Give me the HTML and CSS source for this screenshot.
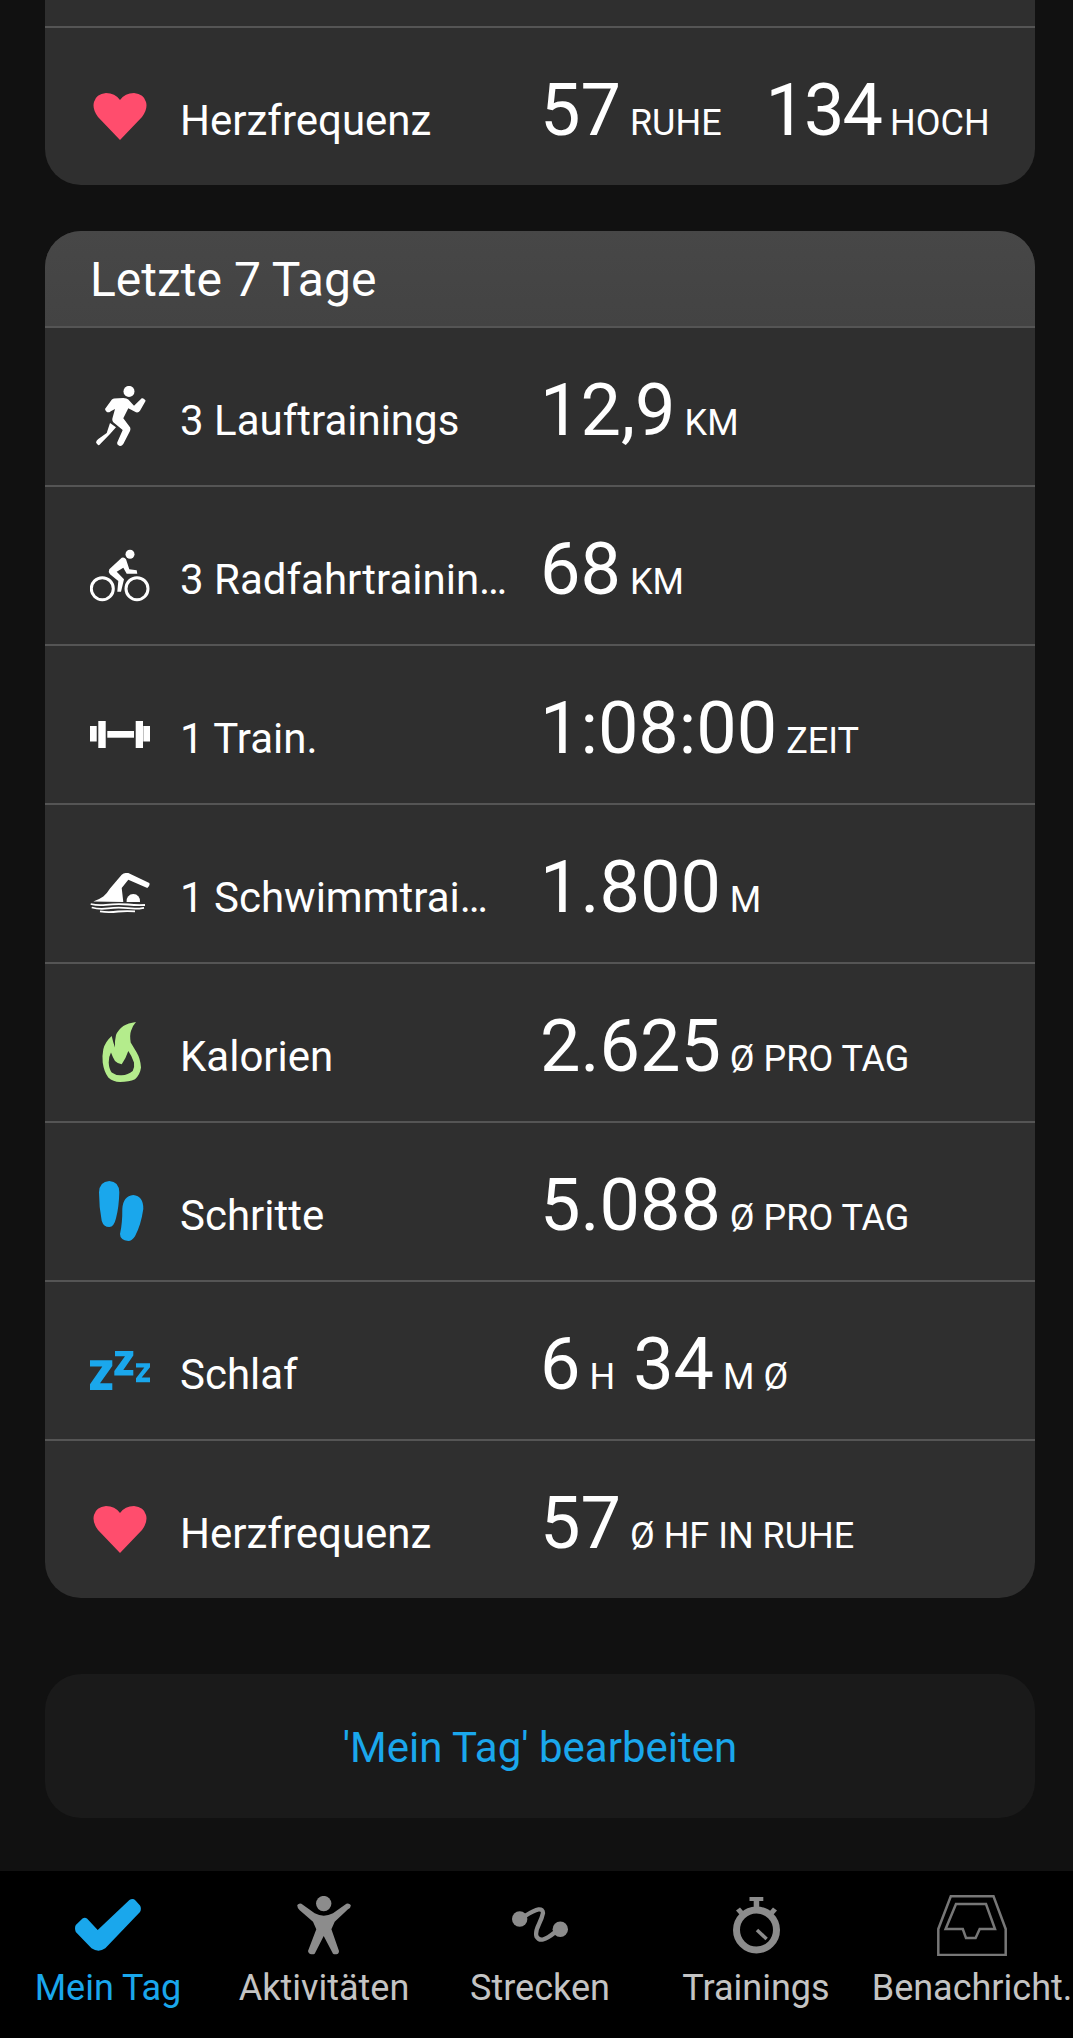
FILE: index.html
```html
<!DOCTYPE html>
<html lang="de">
<head>
<meta charset="utf-8">
<title>Mein Tag</title>
<link rel="stylesheet" href="styles.css">
</head>
<body>
<div class="app">
  <main class="scroll">
    <section class="card card-top">
      <div class="row">
        <span class="icon"><svg width="54" height="47" viewBox="0 0 54 47"><use href="#heart"/></svg></span>
        <div class="text">
          <span class="label">Herzfrequenz</span>
          <span class="value"><b>57</b><i>RUHE</i><b class="gap-wide">134</b><i>HOCH</i></span>
        </div>
      </div>
    </section>

    <section class="card">
      <h2 class="card-head">Letzte 7 Tage</h2>
      <div class="row">
        <span class="icon"><svg width="60" height="60" viewBox="0 0 60 60" fill="#fff"><circle cx="39" cy="5.400" r="5.500"/><path d="M15 23 L21.700 13.700 Q22.500 12.800 24 12.600 L33.300 12 Q36.800 12 38.300 13.500 L44 19.700 L51.700 12.300 Q53.800 11.500 55.700 14.700 L50 24.700 Q48.500 27 46 26.300 L38.300 22.300 L33.300 32.300 L40 41.300 Q40.800 43 40 45 L33.300 58 Q31.500 60.500 29.300 59.700 Q26.500 58.500 27.300 56.300 L32.700 44 L23.300 36.300 Q21.800 34.500 22.500 32 L25 23 L21.700 24.700 L19.300 26.300 Q16 26.800 15 23 Z"/><path d="M20 37 L26 41.300 L20 48 L9.300 59 Q7.500 60 6 56.300 Q6.500 54.500 8.300 53 L16.700 47 Z"/></svg></span>
        <div class="text">
          <span class="label">3 Lauftrainings</span>
          <span class="value"><b>12,9</b><i>KM</i></span>
        </div>
      </div>
      <div class="row">
        <span class="icon"><svg width="60" height="53" viewBox="0 0 60 53" fill="#fff"><circle cx="40" cy="5.300" r="4.500"/><circle cx="12.300" cy="39.700" r="11" fill="none" stroke="#fff" stroke-width="3"/><circle cx="47" cy="39.700" r="11" fill="none" stroke="#fff" stroke-width="3"/><path d="M19.300 20.300 L31.700 8.700 Q34.500 7.800 36 10.300 L39.300 20.300 L46.700 21.300 L47.300 24.700 L36.700 24.700 L33.300 18.700 L26.700 22.700 L34 30.300 L31 42.700 L27.300 42.700 L28.300 32 L20 25.300 Q18 22.500 19.300 20.300 Z"/></svg></span>
        <div class="text">
          <span class="label">3 Radfahrtrainin…</span>
          <span class="value"><b>68</b><i>KM</i></span>
        </div>
      </div>
      <div class="row">
        <span class="icon"><svg width="60" height="27" viewBox="0 0 60 27" fill="#fff"><rect x="0" y="5" width="6.700" height="15.500"/><rect x="8.300" y="0" width="7.400" height="27"/><rect x="17.300" y="10" width="26.700" height="6.700"/><rect x="45.700" y="0" width="7.300" height="27"/><rect x="53.300" y="5" width="6.700" height="15.500"/></svg></span>
        <div class="text">
          <span class="label">1 Train.</span>
          <span class="value"><b>1:08:00</b><i>ZEIT</i></span>
        </div>
      </div>
      <div class="row">
        <span class="icon"><svg width="60" height="41" viewBox="0 0 60 41" fill="#fff"><path d="M3.300 28.400 Q9 26.500 13.300 23.400 Q17 20.500 20 15.500 L31.700 1.700 Q34.500 -0.500 38.300 0 L59.300 10 Q60.500 12.500 57.300 15 L38.300 6.700 L31.700 15 L33.300 29 Z"/><path d="M36.600 29 A6.800 6.800 0 1 1 50 29 Z"/><path d="M0.700 31 Q8 32.800 16 31.800 Q28 30.500 38 31.500 Q47 32.500 55 32 M1.700 34.500 Q9 36.500 18 35.400 Q28 34 38 35.200 Q46 36.300 54 34.800 M10 38.400 Q18 39.600 28 38.500 Q36 38 45 38.400" fill="none" stroke="#fff" stroke-width="1.800"/></svg></span>
        <div class="text">
          <span class="label">1 Schwimmtrai…</span>
          <span class="value"><b>1.800</b><i>M</i></span>
        </div>
      </div>
      <div class="row">
        <span class="icon"><svg width="60" height="60" viewBox="0 0 60 60"><path fill="#b4ec8c" fill-rule="evenodd" d="M46 0 Q38 1 33.300 4 Q28 8 26 13 Q24.500 19 25 25.600 Q23 20 21.700 14 Q15 20 13.300 27.300 Q12 34 12.700 40.600 Q14 50 18.300 55.600 Q23 60 30 60 Q39 60 45 57.300 Q50 53 51 45.600 Q50.500 37 46.700 30.600 L40.700 20.600 Q39.500 13 41 9 Q43 3 46 0 Z M21 30.600 Q18.500 35 18.700 40.600 Q19 47 21.700 50.600 Q26 53.800 31.700 53.300 Q38 53 42.700 49 Q44.800 45 44 40.600 Q42 34 38.300 28.900 Q36 36 31.700 42.300 Q28 42 25 39 Q22.500 35 21 30.600 Z"/></svg></span>
        <div class="text">
          <span class="label">Kalorien</span>
          <span class="value"><b>2.625</b><i>Ø PRO TAG</i></span>
        </div>
      </div>
      <div class="row">
        <span class="icon"><svg width="60" height="60" viewBox="0 0 60 60" fill="#1aa7ec"><path d="M19.300 0 Q29 0.500 29.300 11.300 Q29 26 26 37.300 Q24 46 19.300 46 Q13.500 46 11.700 39.700 Q9 26 9 11.300 Q9.500 0.500 19.300 0 Z"/><path d="M43.300 14 Q53.500 15 53.300 28 Q51 44 45 55.300 Q42 60 38.300 60 Q30 59 30 53 Q32.500 42 32.300 28 Q33 15 43.300 14 Z"/></svg></span>
        <div class="text">
          <span class="label">Schritte</span>
          <span class="value"><b>5.088</b><i>Ø PRO TAG</i></span>
        </div>
      </div>
      <div class="row">
        <span class="icon"><svg width="60" height="39" viewBox="0 0 60 39" fill="#1aa7ec"><path d="M0 9.300 H22.300 V15 L10 32.300 H22.300 V39 H0 V33.300 L12.300 15.600 H0 Z"/><path d="M25 0 H43.300 V4.600 L33.300 19 H43.300 V24.600 H24.300 V20 L35 5.300 H25 Z"/><path d="M46 12.300 H60 V16.300 L51.700 26.600 H60 V31.300 H46 V27.300 L54.300 16.600 H46 Z"/></svg></span>
        <div class="text">
          <span class="label">Schlaf</span>
          <span class="value"><b>6</b><i>H</i><b class="gap">34</b><i>M Ø</i></span>
        </div>
      </div>
      <div class="row">
        <span class="icon"><svg width="54" height="47" viewBox="0 0 54 47"><use href="#heart"/></svg></span>
        <div class="text">
          <span class="label">Herzfrequenz</span>
          <span class="value"><b>57</b><i>Ø HF IN RUHE</i></span>
        </div>
      </div>
    </section>

    <a class="edit">'Mein Tag' bearbeiten</a>
  </main>

  <nav class="tabbar">
    <div class="tab tab-active">
      <span class="tab-icon"><svg width="66" height="52" viewBox="0 0 66 52" fill="#1aa7ec"><path d="M0.800 26 L7.500 19.500 Q9.800 17.800 12 19.500 L22.700 31 L54.400 1 Q58 -1 60.500 1.500 L65 6.500 Q66.800 9.500 65 13 L30.300 49.300 Q23.500 54 16.500 49.300 L0.800 33 Q-0.800 29 0.800 26 Z"/></svg></span>
      <span class="tab-label">Mein Tag</span>
    </div>
    <div class="tab">
      <span class="tab-icon"><svg width="54" height="59" viewBox="0 0 54 59" fill="#8c8c8c"><circle cx="26.700" cy="7.600" r="7.700"/><path d="M0.300 9 Q2 6.800 4.400 7.700 L17.700 17.300 Q26.700 22 36 17.300 L49.400 7.700 Q52 6.800 53.700 9 Q54.200 12 51 13.300 L37.700 25.700 L34.400 33.300 L42 55 Q42 58 39.400 58.300 Q37 58.500 36 57.700 L26.700 40 L17.700 57.700 Q16.500 58.500 14.400 58.300 Q11.500 58 11 55 L19.300 33.300 L16 25.700 L2.700 14.300 Q0 12 0.300 9 Z"/></svg></span>
      <span class="tab-label">Aktivitäten</span>
    </div>
    <div class="tab">
      <span class="tab-icon"><svg width="56" height="36" viewBox="0 0 56 36" fill="none" stroke="#8c8c8c"><circle cx="7.700" cy="12" r="7.700" fill="#8c8c8c" stroke="none"/><circle cx="48.300" cy="22.300" r="7.700" fill="#8c8c8c" stroke="none"/><path d="M13 9 Q22 3 26.600 2.300 Q31 2 31 6 Q30 11 27 17 Q23 25 24.500 29.500 Q27 33.500 31 32.500 Q36 31 42 26" stroke-width="4.300" stroke-linecap="round"/></svg></span>
      <span class="tab-label">Strecken</span>
    </div>
    <div class="tab">
      <span class="tab-icon"><svg width="47" height="57" viewBox="0 0 47 57" fill="none"><path d="M16.500 0 H30.300 V4 H26.200 V12 H20.700 V4 H16.500 Z" fill="#8c8c8c"/><path d="M3 13.500 L7 10.500 L10.500 14.500 L6.500 17.500 Z M44 13.500 L40 10.500 L36.500 14.500 L40.500 17.500 Z" fill="#8c8c8c"/><circle cx="23.500" cy="33" r="20" stroke="#8c8c8c" stroke-width="7"/><path d="M24 33 L33.600 42" stroke="#8c8c8c" stroke-width="3.500"/></svg></span>
      <span class="tab-label">Trainings</span>
    </div>
    <div class="tab">
      <span class="tab-icon"><svg width="70" height="61" viewBox="0 0 70 61" fill="none" stroke="#777" stroke-width="2.500"><path d="M1.300 34 L13.800 1.300 H56.500 L68.700 34 V60 H1.300 Z"/><path d="M19 9 H49 L58 34 H42.700 L38.600 43 H29 L25.800 34 H8.600 Z"/></svg></span>
      <span class="tab-label">Benachricht.</span>
    </div>
  </nav>
</div>

<svg class="defs" width="0" height="0" aria-hidden="true"><defs><path id="heart" fill="#ff4d6d" d="M27 47 L5 24 Q-1 16 1 9 Q3 1 13 0 Q22 0 27 7 Q32 0 41 0 Q51 1 53 9 Q55 16 49 24 Z"/></defs></svg>
</body>
</html>
```

FILE: styles.css
```css
* { box-sizing: border-box; }
html, body { margin: 0; padding: 0; background: #111; }
.app {
  width: 1073px;
  height: 2038px;
  display: flex;
  flex-direction: column;
  font-family: Roboto, "Liberation Sans", sans-serif;
  color: #fff;
  overflow: hidden;
}
.scroll {
  flex: 1;
  padding: 0 38px 0 45px;
  background: #111;
}
.card {
  background: #2f2f2f;
  border-radius: 36px;
  overflow: hidden;
}
.card-top {
  height: 185px;
  padding-top: 26px;
  border-radius: 0 0 36px 36px;
  margin-bottom: 46px;
}
.card-head {
  margin: 0;
  height: 95px;
  padding: 19px 0 0 45px;
  font-size: 48px;
  line-height: 60px;
  font-weight: 400;
  background: linear-gradient(#474747, #434343);
}
.row {
  height: 159px;
  border-top: 2px solid #555;
  display: flex;
  align-items: center;
  padding: 9px 0 0 45px;
}
.icon {
  width: 60px;
  margin-top: 10px;
  display: flex;
  justify-content: center;
  align-items: center;
  flex: none;
}
.text {
  display: flex;
  align-items: baseline;
  margin-left: 30px;
}
.label {
  width: 360px;
  font-size: 42px;
  white-space: nowrap;
  flex: none;
}
.value {
  display: flex;
  align-items: baseline;
  white-space: nowrap;
}
.value b {
  font-weight: 400;
  font-size: 72px;
  line-height: 84px;
}
.value i {
  font-style: normal;
  font-size: 36px;
  margin-left: 9px;
}
.value b.gap { margin-left: 18px; }
.value b.gap-wide { margin-left: 44px; letter-spacing: -2px; }
.edit {
  display: flex;
  align-items: center;
  justify-content: center;
  height: 144px;
  padding-top: 2px;
  margin-top: 76px;
  background: #1a1a1a;
  border-radius: 36px;
  color: #1aa7ec;
  font-size: 42px;
}
.tabbar {
  height: 167px;
  background: #000;
  display: flex;
  flex: none;
  overflow: hidden;
}
.tab {
  flex: 0 0 216px;
  display: flex;
  flex-direction: column;
  align-items: center;
  color: #c4c4c4;
  font-size: 36px;
  white-space: nowrap;
}
.tab-icon {
  height: 64px;
  margin-top: 22px;
  display: flex;
  align-items: center;
  justify-content: center;
}
.tab-label { margin-top: 9px; line-height: 44px; }
.tab-active { color: #1aa7ec; }
.defs { position: absolute; }
```
